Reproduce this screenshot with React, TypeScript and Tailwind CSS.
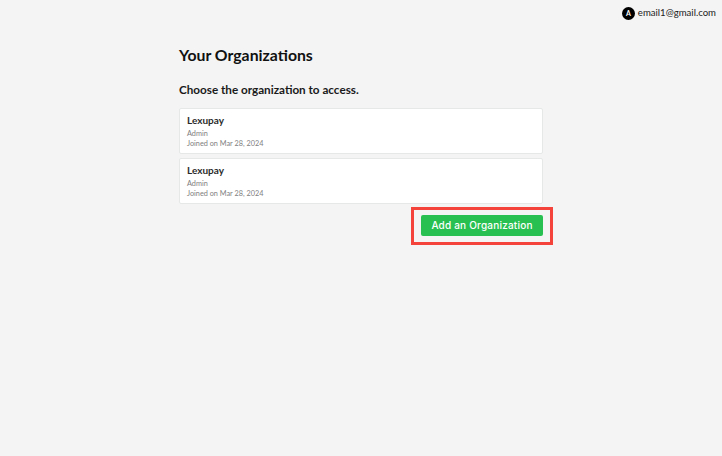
function OrgCard({ name, role, joined }: { name: string; role: string; joined: string }) {
  return (
    <div className="h-[46px] rounded-[2px] border border-[#e6e8e8] bg-white px-[7px] pt-[5px]">
      <p className="text-[10px] leading-[13px] font-bold text-[#2a2a2a]">{name}</p>
      <p className="mt-[2px] text-[7.3px] leading-[10px] text-[#808080]">{role}</p>
      <p className="text-[7.3px] leading-[10px] text-[#808080]">{joined}</p>
    </div>
  );
}

export default function App() {
  return (
    <div className="h-[456px] w-[722px] overflow-hidden bg-[#f4f4f4] font-['Lato',sans-serif] antialiased">
      {/* Header */}
      <div className="flex h-[26px] items-center justify-end gap-[3px] pr-[6px]">
        <div className="flex h-[13px] w-[13px] items-center justify-center rounded-full bg-black text-[7px] font-bold text-white">
          A
        </div>
        <span className="text-[9.6px] text-[#222]">email1@gmail.com</span>
      </div>

      <div className="ml-[179px] w-[364px]">
        <h1 className="mt-[19px] text-[15.8px] leading-[20px] font-bold text-[#111]">Your Organizations</h1>
        <h2 className="mt-[17px] text-[11.7px] leading-[15px] font-bold text-[#1a1a1a]">
          Choose the organization to access.
        </h2>

        <div className="mt-[11px] flex flex-col gap-[4px]">
          <OrgCard name="Lexupay" role="Admin" joined="Joined on Mar 28, 2024" />
          <OrgCard name="Lexupay" role="Admin" joined="Joined on Mar 28, 2024" />
        </div>

        <div className="mt-[3px] -mr-[10px] flex justify-end">
          <div className="border-[3px] border-[#f4433a] px-[7px] pt-[5px] pb-[6px]">
            <button className="flex h-[21px] w-[122px] items-center justify-center rounded-[2px] bg-[#28c050] font-['Inter',sans-serif] text-[10px] font-medium tracking-[0.2px] text-white">
              Add an Organization
            </button>
          </div>
        </div>
      </div>
    </div>
  );
}
